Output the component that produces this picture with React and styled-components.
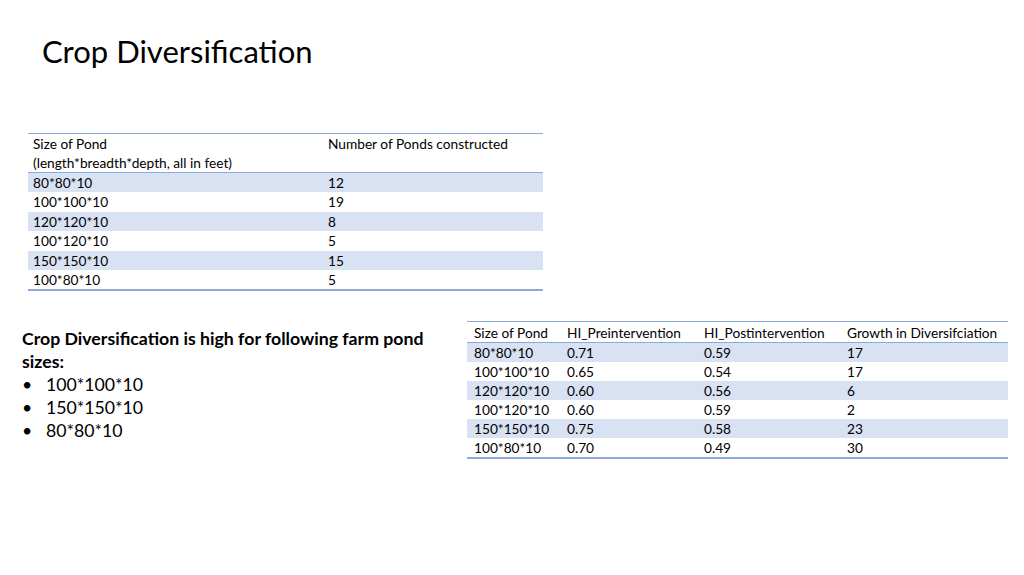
import React from 'react';
import styled, { createGlobalStyle } from 'styled-components';

const GlobalStyle = createGlobalStyle`
  html, body {
    margin: 0;
    padding: 0;
    background: #ffffff;
  }
  body {
    font-family: Lato, 'Open Sans', sans-serif;
    color: #000000;
  }
`;

const Slide = styled.div`
  width: 1024px;
  height: 575px;
  overflow: hidden;
  box-sizing: border-box;
  padding-top: 33px;
  background: #ffffff;
`;

const Title = styled.h1`
  margin: 0 0 0 42px;
  font-size: 31px;
  line-height: 37px;
  font-weight: 400;
`;

const Table = styled.table`
  border-collapse: collapse;
  table-layout: fixed;
  width: ${(p) => p.$width}px;
  margin-left: ${(p) => p.$left || 0}px;
  margin-top: ${(p) => p.$top || 0}px;
  font-size: 13.7px;
  border-top: 1px solid #8eaadb;
  border-bottom: 2px solid #8eaadb;
`;

const HeadCell = styled.th`
  text-align: left;
  font-weight: 400;
  vertical-align: top;
  padding: ${(p) => p.$padTop || 0}px 0 0 ${(p) => p.$pad}px;
  height: ${(p) => p.$h}px;
  line-height: 19px;
  border-bottom: 1px solid #8eaadb;
  white-space: nowrap;
  box-sizing: border-box;
`;

const Row = styled.tr`
  background: ${(p) => (p.$shade ? '#d9e2f3' : '#ffffff')};
`;

const Cell = styled.td`
  padding: 0 0 0 ${(p) => p.$pad}px;
  height: ${(p) => p.$h}px;
  line-height: ${(p) => p.$h}px;
  white-space: nowrap;
`;

const Lower = styled.div`
  display: flex;
  align-items: flex-start;
  margin-top: 30px;
`;

const Notes = styled.div`
  width: 445px;
  box-sizing: border-box;
  padding: 6px 0 0 22px;
  font-size: 17.7px;
  line-height: 23px;
`;

const Lead = styled.p`
  margin: 0;
  font-weight: 700;
  width: 415px;
`;

const Bullets = styled.ul`
  list-style: none;
  margin: 0;
  padding: 0;
`;

const Bullet = styled.li`
  display: flex;
  &::before {
    content: '•';
    width: 24px;
    flex: none;
  }
`;

const ponds = [
  ['80*80*10', '12'],
  ['100*100*10', '19'],
  ['120*120*10', '8'],
  ['100*120*10', '5'],
  ['150*150*10', '15'],
  ['100*80*10', '5'],
];

const hi = [
  ['80*80*10', '0.71', '0.59', '17'],
  ['100*100*10', '0.65', '0.54', '17'],
  ['120*120*10', '0.60', '0.56', '6'],
  ['100*120*10', '0.60', '0.59', '2'],
  ['150*150*10', '0.75', '0.58', '23'],
  ['100*80*10', '0.70', '0.49', '30'],
];

const hiCols = [93, 137, 143, 168];

export default function App() {
  return (
    <>
      <GlobalStyle />
      <Slide>
        <Title>Crop Diversification</Title>

        <Table $width={515} $left={28} $top={63}>
          <colgroup>
            <col style={{ width: 300 }} />
            <col style={{ width: 215 }} />
          </colgroup>
          <thead>
            <tr>
              <HeadCell $pad={5} $h={39}>
                Size of Pond
                <br />
                (length*breadth*depth, all in feet)
              </HeadCell>
              <HeadCell $pad={0} $h={39}>
                Number of Ponds constructed
              </HeadCell>
            </tr>
          </thead>
          <tbody>
            {ponds.map((r, i) => (
              <Row key={r[0]} $shade={i % 2 === 0}>
                <Cell $pad={5} $h={19.4}>{r[0]}</Cell>
                <Cell $pad={0} $h={19.4}>{r[1]}</Cell>
              </Row>
            ))}
          </tbody>
        </Table>

        <Lower>
          <Notes>
            <Lead>Crop Diversification is high for following farm pond sizes:</Lead>
            <Bullets>
              <Bullet>100*100*10</Bullet>
              <Bullet>150*150*10</Bullet>
              <Bullet>80*80*10</Bullet>
            </Bullets>
          </Notes>

          <Table $width={541} $left={22}>
            <colgroup>
              {hiCols.map((w, i) => (
                <col key={i} style={{ width: w }} />
              ))}
            </colgroup>
            <thead>
              <tr>
                <HeadCell $pad={7} $padTop={1} $h={19}>Size of Pond</HeadCell>
                <HeadCell $pad={7} $padTop={1} $h={19}>HI_Preintervention</HeadCell>
                <HeadCell $pad={7} $padTop={1} $h={19}>HI_Postintervention</HeadCell>
                <HeadCell $pad={7} $padTop={1} $h={19}>Growth in Diversifciation</HeadCell>
              </tr>
            </thead>
            <tbody>
              {hi.map((r, i) => (
                <Row key={r[0]} $shade={i % 2 === 0}>
                  {r.map((v, j) => (
                    <Cell key={j} $pad={7} $h={19}>{v}</Cell>
                  ))}
                </Row>
              ))}
            </tbody>
          </Table>
        </Lower>
      </Slide>
    </>
  );
}
